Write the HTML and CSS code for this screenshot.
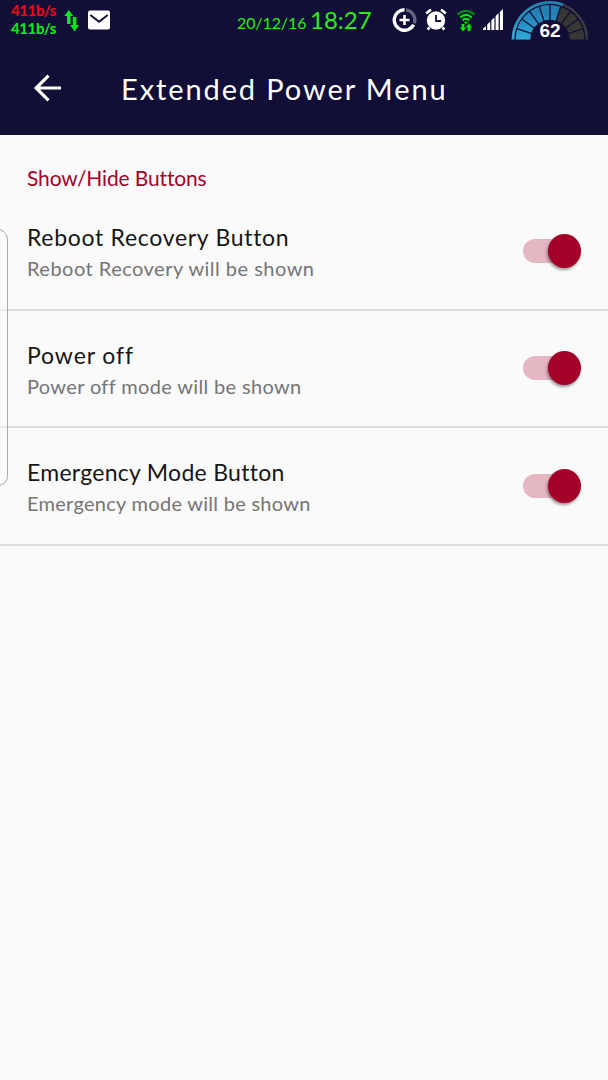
FILE: index.html
```html
<!DOCTYPE html>
<html lang="en">
<head>
    <meta charset="UTF-8">
    <meta name="viewport" content="width=device-width, initial-scale=1.0">
    <title>Extended Power Menu</title>
    <link rel="stylesheet" href="styles.css">
</head>
<body>
    <header class="header">
        <div class="status-bar">
            <div class="net-speed">
                <span class="speed-up">411b/s</span>
                <span class="speed-down">411b/s</span>
            </div>
            <svg class="icon-arrows" width="16" height="24" viewBox="0 0 16 24">
                <path fill="#08e818" d="M4.800 0L9.300 6H6.600V14H3V6H.3z M8.800 7h3.600v8H15L10.600 21.500 6.200 15H8.800z"/>
            </svg>
            <svg class="icon-mail" width="22" height="20" viewBox="0 0 22 20">
                <rect width="22" height="19" y=".5" rx="2" fill="#fff"/>
                <path d="M2.300 5L11 11.700 19.700 5" fill="none" stroke="#110e38" stroke-width="2"/>
            </svg>
            <div class="clock">
                <span class="date">20/12/16</span>
                <span class="time">18:27</span>
            </div>
            <svg class="icon-data" width="25" height="26" viewBox="0 0 25 26">
                <path d="M12.500 2.700A10.300 10.300 0 1 0 21.700 17.700" fill="none" stroke="#fff" stroke-width="3.400"/>
                <path d="M14.200 2.900A10.300 10.300 0 0 1 22.300 16.200" fill="none" stroke="#66647e" stroke-width="3.400"/>
                <path d="M12.500 8v10M7.500 13h10" stroke="#fff" stroke-width="2.600"/>
            </svg>
            <svg class="icon-alarm" width="22" height="24" viewBox="0 0 22 24">
                <circle cx="11" cy="12.500" r="9.200" fill="#fff"/>
                <path d="M1.200 5.400L6 1.400M20.800 5.400L16 1.400M4.500 19.500L2.500 21.500M17.500 19.500L19.500 21.500" stroke="#fff" stroke-width="2.600"/>
                <path d="M11 7v6h5" fill="none" stroke="#110e38" stroke-width="1.800"/>
            </svg>
            <svg class="icon-wifi" width="20" height="24" viewBox="0 0 20 24">
                <g fill="none" stroke="#00e800" stroke-width="2.100">
                    <path d="M1.500 5.600Q10 -1.800 18.500 5.600" stroke="#07831e"/>
                    <path d="M4.200 8.500Q10 3.300 15.800 8.500"/>
                    <path d="M6.600 11.400Q10 8.400 13.400 11.400"/>
                </g>
                <path fill="#00e800" d="M8.200 13.200Q10 11.600 11.800 13.200L10 15z M5.600 15h2.800v3.500H10.200L7 22.500 3.800 18.500h1.800z M13 14.500l3.300 4h-1.900V22h-2.800v-3.500h-1.900z"/>
            </svg>
            <svg class="icon-signal" width="20" height="22" viewBox="0 0 20 22">
                <path fill="#fff" d="M0 21v-1.500L3 17v4z M4.200 21v-5.500L7.200 12.800V21z M8.400 21v-9.700L11.400 8.600V21z M12.600 21V7l3-2.700V21z M16.900 21V2.900L20 0v21z"/>
            </svg>
            <div class="battery">
                <svg width="78" height="40" viewBox="0 0 78 40">
                    <defs>
                        <linearGradient id="level" x1="0" y1="0" x2="0" y2="1">
                            <stop offset="0" stop-color="#237fb4"/>
                            <stop offset="1" stop-color="#2eaad7"/>
                        </linearGradient>
                    </defs>
                    <g fill="none">
                        <path d="M2 39.500A37 37 0 0 1 76 39.500" stroke="#3a3b40" stroke-width="2.600"/>
                        <path d="M2 39.500A37 37 0 0 1 52 4.800" stroke="url(#level)" stroke-width="2.800"/>
                        <path d="M12 39.500A27 27 0 0 1 66 39.500" stroke="#373833" stroke-width="14.500"/>
                        <path d="M12 39.500A27 27 0 0 1 47.300 13.800" stroke="url(#level)" stroke-width="14.500"/>
                    </g>
                    <g id="ticks" stroke="#110e38" stroke-width="1.300"></g>
                </svg>
                <span class="battery-level">62</span>
            </div>
        </div>
        <div class="toolbar">
            <svg class="icon-back" width="28" height="28" viewBox="0 0 28 28">
                <path d="M28 14H3.500M15.500 1.700L3.200 14 15.500 26.300" fill="none" stroke="#fff" stroke-width="3.200"/>
            </svg>
            <h1>Extended Power Menu</h1>
        </div>
    </header>
    <main>
        <h2 class="category">Show/Hide Buttons</h2>
        <div class="preference reboot">
            <div class="text">
                <div class="title">Reboot Recovery Button</div>
                <div class="summary">Reboot Recovery will be shown</div>
            </div>
            <div class="switch"><div class="thumb"></div></div>
        </div>
        <div class="preference power">
            <div class="text">
                <div class="title">Power off</div>
                <div class="summary">Power off mode will be shown</div>
            </div>
            <div class="switch"><div class="thumb"></div></div>
        </div>
        <div class="preference emergency">
            <div class="text">
                <div class="title">Emergency Mode Button</div>
                <div class="summary">Emergency mode will be shown</div>
            </div>
            <div class="switch"><div class="thumb"></div></div>
        </div>
        <div class="edge-handle"></div>
    </main>
    <script>
        // Gauge dividers, one every 18 degrees
        const ticks = document.getElementById('ticks');
        for (let i = 1; i < 10; i++) {
            const line = document.createElementNS('http://www.w3.org/2000/svg', 'line');
            const a = Math.PI * i / 10;
            line.setAttribute('x1', 39 - 19 * Math.cos(a));
            line.setAttribute('y1', 39.5 - 19 * Math.sin(a));
            line.setAttribute('x2', 39 - 35 * Math.cos(a));
            line.setAttribute('y2', 39.5 - 35 * Math.sin(a));
            ticks.appendChild(line);
        }
    </script>
</body>
</html>
```

FILE: styles.css
```css
* {
    margin: 0;
    padding: 0;
    box-sizing: border-box;
}

body {
    font-family: Lato, sans-serif;
    font-variant-ligatures: none;
    background: #fafafa;
    height: 1080px;
    overflow: hidden;
    white-space: nowrap;
}

svg {
    display: block;
    flex-shrink: 0;
}

.header {
    height: 135px;
    background: #110e38;
    color: #fff;
}

/* Status bar */
.status-bar {
    display: flex;
    align-items: flex-start;
    height: 40px;
    padding-left: 11px;
}

.net-speed {
    display: flex;
    flex-direction: column;
    width: 45px;
    margin-top: 1px;
    font-size: 15px;
    font-weight: bold;
    line-height: 18px;
    letter-spacing: -0.4px;
}

.speed-up {
    color: #f50a12;
}

.speed-down {
    color: #08f018;
}

.icon-arrows {
    margin: 10px 0 0 8px;
}

.icon-mail {
    margin: 10px 0 0 8px;
}

.clock {
    display: flex;
    align-items: baseline;
    width: 136px;
    margin: 6px 0 0 127px;
    color: #2af012;
    line-height: 28px;
}

.date {
    width: 73px;
    font-size: 16px;
    letter-spacing: -0.1px;
}

.time {
    font-size: 24px;
}

.icon-data {
    margin: 7px 0 0 19px;
}

.icon-alarm {
    margin: 8px 0 0 8px;
}

.icon-wifi {
    margin: 9px 0 0 9px;
}

.icon-signal {
    margin: 9px 0 0 7px;
}

.battery {
    position: relative;
    margin-left: 8px;
}

.battery-level {
    position: absolute;
    left: 0;
    right: 0;
    top: 20px;
    font: bold 19px/22px "Liberation Sans", sans-serif;
    text-align: center;
}

/* Toolbar */
.toolbar {
    display: flex;
    align-items: center;
    height: 95px;
    padding-left: 33px;
}

.toolbar h1 {
    margin: 2px 0 0 60px;
    font-size: 29px;
    font-weight: normal;
    letter-spacing: 1.9px;
}

/* Preference list */
main {
    position: relative;
}

.category {
    height: 58px;
    padding: 29px 0 0 27px;
    color: #a50027;
    font-size: 21px;
    font-weight: normal;
    line-height: 28px;
    letter-spacing: -0.15px;
}

.preference {
    display: flex;
    justify-content: space-between;
    align-items: center;
    height: 117.6px;
    padding: 0 27px;
    border-bottom: 2px solid #dcdcdc;
}

.text {
    padding-top: 4px;
}

.title {
    color: #161616;
    font-size: 23px;
    line-height: 31px;
}

.summary {
    color: #757575;
    font-size: 20px;
    line-height: 30px;
}

.reboot .title {
    letter-spacing: 0.7px;
}

.reboot .summary {
    letter-spacing: 0.48px;
}

.power .title {
    letter-spacing: 0.9px;
}

.power .summary {
    letter-spacing: 0.35px;
}

.emergency .title {
    letter-spacing: 0.28px;
}

.emergency .summary {
    letter-spacing: 0.28px;
}

.switch {
    display: flex;
    justify-content: flex-end;
    align-items: center;
    width: 58px;
    height: 24px;
    border-radius: 12px 0 0 12px;
    background: linear-gradient(90deg, #e4b7c3 36px, transparent 36px);
}

.thumb {
    flex-shrink: 0;
    width: 33px;
    height: 34px;
    border-radius: 50%;
    background: #a50027;
    box-shadow: -1px 2px 3px rgba(0, 0, 0, 0.4);
}

/* Edge panel handle */
.edge-handle {
    position: absolute;
    left: -12px;
    top: 94px;
    width: 20px;
    height: 257px;
    border: 1px solid #aaa;
    border-radius: 11px;
    background: rgba(250, 250, 250, 0.5);
}
```
